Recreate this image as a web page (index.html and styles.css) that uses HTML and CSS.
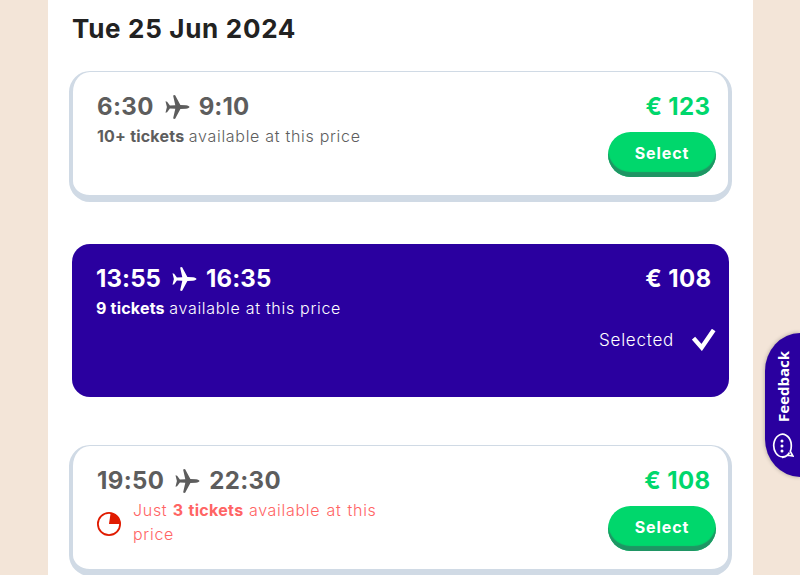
FILE: index.html
```html
<!DOCTYPE html>
<html lang="en">
<head>
    <meta charset="UTF-8">
    <meta name="viewport" content="width=device-width, initial-scale=1.0">
    <title>Select your flight</title>
    <link rel="stylesheet" href="styles.css">
</head>
<body>
    <svg width="0" height="0" class="sprite">
        <symbol id="plane" viewBox="0 0 24 24">
            <path d="M0 6.300l1.600.4 2.800 3.700 5.400-.2L7.600.5 9.500 0l5.400 10 5.600.3c1.900.2 3.500.9 3.500 1.700s-1.600 1.500-3.500 1.700l-5.600.3L9.500 24l-1.900-.5L9.800 13.800l-5.400-.2-2.800 3.700-1.600.4L1.400 12z"/>
        </symbol>
    </svg>

    <main class="page">
        <h1 class="date">Tue 25 Jun 2024</h1>

        <div class="flight">
            <div class="info">
                <div class="times"><span class="wide">6:30</span><svg class="plane"><use href="#plane"/></svg><span>9:10</span></div>
                <p class="tickets"><b>10+ tickets</b> <span>available at this price</span></p>
            </div>
            <div class="action">
                <div class="price">€ 123</div>
                <button class="select">Select</button>
            </div>
        </div>

        <div class="flight selected">
            <div class="info">
                <div class="times"><span>13:55</span><svg class="plane"><use href="#plane"/></svg><span>16:35</span></div>
                <p class="tickets"><b>9 tickets</b> <span>available at this price</span></p>
            </div>
            <div class="action">
                <div class="price">€ 108</div>
                <div class="selected-label">
                    <span>Selected</span>
                    <svg width="24" height="22" viewBox="0 0 24 22"><path d="M1.500 9.200l8.200 9.300L21.700 1" fill="none" stroke="#fff" stroke-width="4.400"/></svg>
                </div>
            </div>
        </div>

        <div class="flight">
            <div class="info">
                <div class="times"><span class="wide">19:50</span><svg class="plane"><use href="#plane"/></svg><span class="wide">22:30</span></div>
                <div class="warning">
                    <svg class="clock" viewBox="0 0 24 24"><circle cx="12" cy="12" r="11.100" fill="none" stroke="#e01b00" stroke-width="1.800"/><path d="M12 12l1.600-11A11 11 0 0 1 23 12z" fill="#e01b00"/></svg>
                    <p class="tickets"><span>Just</span> <b>3 tickets</b> <span>available at this</span> <span>price</span></p>
                </div>
            </div>
            <div class="action">
                <div class="price">€ 108</div>
                <button class="select">Select</button>
            </div>
        </div>
    </main>

    <div class="feedback">
        <span>Feedback</span>
        <svg width="22" height="26" viewBox="0 0 22 26"><path d="M17.500 19.500A8.800 11.300 0 1 1 19 9.500c.6 3.700.2 6.600-.7 8.800l2.600 4.700-5.300-.8A8.800 11.300 0 0 1 10 24.300" fill="none" stroke="#fff" stroke-width="1.700"/><g fill="#fff"><circle cx="10" cy="8" r="1.500"/><circle cx="10" cy="13" r="1.500"/><circle cx="10" cy="18" r="1.500"/></g></svg>
    </div>
</body>
</html>
```

FILE: styles.css
```css
* {
    box-sizing: border-box;
}

body {
    margin: 0;
    height: 575px;
    overflow: hidden;
    background-color: #f3e5d8;
    font-family: Inter, "Liberation Sans", sans-serif;
    color: #5d5d5d;
}

.sprite {
    position: absolute;
}

.page {
    width: 705px;
    height: 575px;
    overflow: hidden;
    margin-left: 48px;
    padding: 14px 21px 0;
    background-color: #fff;
}

.date {
    margin: 0 0 27px 3px;
    font-size: 26px;
    line-height: 30px;
    font-weight: 700;
    letter-spacing: 0.7px;
    white-space: nowrap;
    color: #222;
}

.flight {
    display: flex;
    justify-content: space-between;
    height: 131px;
    margin-bottom: 42px;
    padding: 20px 12px 0 24px;
    border: solid #d0dae5;
    border-width: 1px 4px 7px;
    border-radius: 21px;
}

.selected {
    height: 153px;
    margin: 0 3px 48px;
    border: 0;
    border-radius: 18px;
    padding: 20px 13px 0 24px;
    background-color: #2a009f;
    color: #fff;
}

.times {
    display: flex;
    align-items: center;
    font-size: 24px;
    line-height: 30px;
    font-weight: 700;
    letter-spacing: 0.1px;
}

.times .wide {
    letter-spacing: 0.35px;
}

.plane {
    width: 25px;
    height: 24px;
    margin: 0 9px 0 11px;
    fill: currentColor;
}

.tickets {
    margin: 2px 0 0;
    font-size: 16px;
    line-height: 24px;
    font-weight: 300;
}

.tickets span {
    letter-spacing: 0.7px;
}

.tickets b {
    font-weight: 700;
    letter-spacing: 0.2px;
}

.warning {
    display: flex;
    align-items: center;
    gap: 12px;
    width: 290px;
    color: #ff6464;
}

.warning .tickets {
    word-spacing: 1px;
}

.warning b {
    letter-spacing: 0.3px;
}

.clock {
    flex: none;
    width: 24px;
    height: 24px;
    margin-top: 5px;
}

.action {
    display: flex;
    flex-direction: column;
    align-items: flex-end;
}

.price {
    margin-right: 5.5px;
    font-size: 24px;
    line-height: 30px;
    font-weight: 700;
    letter-spacing: 0.4px;
    color: #00d76c;
}

.selected .price {
    margin-right: 4.5px;
    color: #fff;
}

.select {
    width: 108px;
    height: 45px;
    margin-top: 10px;
    padding: 0 0 3px;
    border: 0;
    border-radius: 23px;
    background-color: #00d76c;
    box-shadow: inset 0 -5px 1px #1f9564;
    font: 700 16px Inter, sans-serif;
    letter-spacing: 0.9px;
    color: #fff;
}

.selected-label {
    display: flex;
    align-items: center;
    gap: 18px;
    margin-top: 35px;
    font-size: 17px;
    font-weight: 300;
    letter-spacing: 0.75px;
}

/* tab pinned to the right edge */
.feedback {
    position: absolute;
    right: 0;
    top: 333px;
    display: flex;
    flex-direction: column;
    align-items: center;
    width: 35px;
    height: 144px;
    padding-top: 19px;
    border-radius: 35px 0 0 35px / 38px 0 0 38px;
    background-color: #2a009f;
    box-shadow: 0 0 4px rgba(0, 0, 0, 0.3);
    color: #fff;
}

.feedback span {
    height: 70px;
    margin-bottom: 11px;
    writing-mode: vertical-rl;
    transform: rotate(180deg);
    font: 700 15px/20px "Open Sans", sans-serif;
}
```
